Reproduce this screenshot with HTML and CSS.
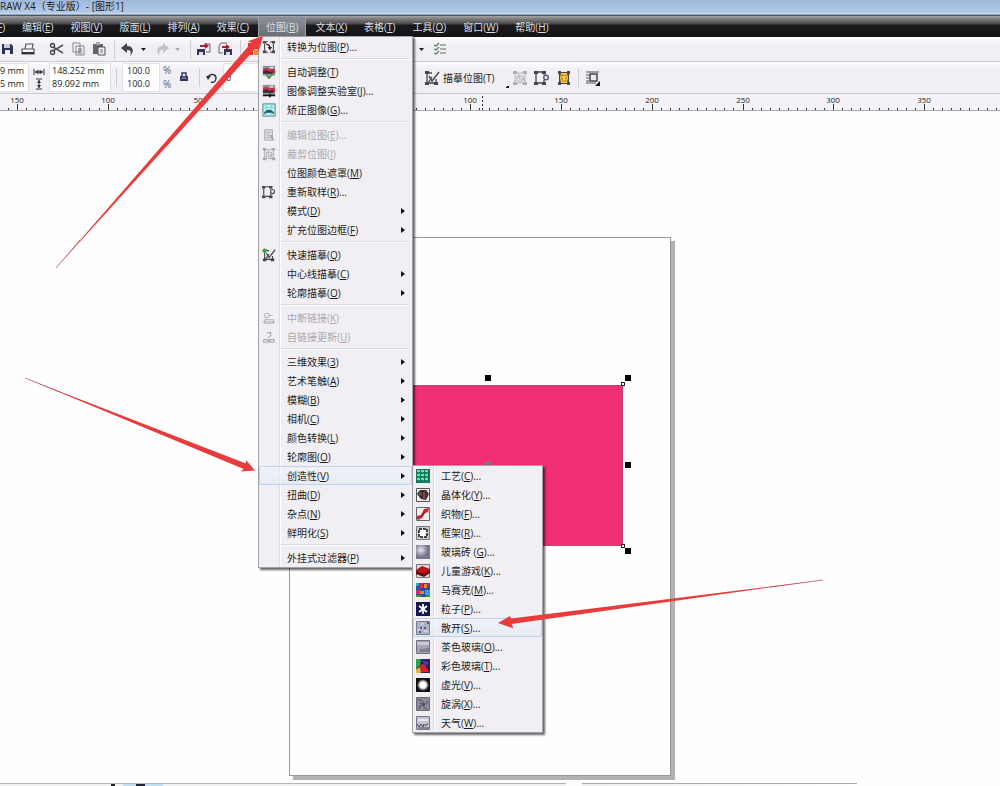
FILE: index.html
```html
<!DOCTYPE html>
<html lang="zh-CN">
<head>
<meta charset="utf-8">
<title>图形1</title>
<link rel="stylesheet" href="styles.css">
</head>
<body>
<svg class="defs" aria-hidden="true">
  <defs>
    <symbol id="frame" viewBox="0 0 16 16"><path d="M3 3H13V13H3Z" fill="none" stroke="currentColor" stroke-width="1"/><path d="M1 1H5V4H1ZM11 1H15V4H11ZM1 12H5V15H1ZM11 12H15V15H11Z" fill="currentColor"/></symbol>
    <symbol id="convert" viewBox="0 0 16 16"><path d="M3 4V12M13 4V12M5 2H7M9 2H11M5 14H7M9 14H11" stroke="#4c4956" stroke-width="1.3" fill="none"/><path d="M1 1H5V4H1ZM11 1H15V4H11ZM1 12H5V15H1ZM11 12H15V15H11Z" fill="#4c4956"/><path d="M5 5C8 5 9 6 9 9" stroke="#222" stroke-width="1.4" fill="none"/><path d="M6.500 8H11.500L9 12Z" fill="#222"/></symbol>
    <symbol id="photo" viewBox="0 0 16 16"><path d="M1 1H15V12H1Z" fill="#8c8fa0"/><path d="M1 5L5 3L8 5L13 4L15 6V9L8 10L1 8Z" fill="#c9283d"/><path d="M1 8L5 6L8 8L13 7V10H1Z" fill="#342b34"/><path d="M9 2H13V4H9Z" fill="#dde3ed"/></symbol>
    <symbol id="crop" viewBox="0 0 16 16"><path d="M3 3H13V13H3ZM5 6H11V11H5ZM7 4V9H13" fill="none" stroke="currentColor"/><path d="M1 1H5V4H1ZM11 1H15V4H11ZM1 12H5V15H1ZM11 12H15V15H11Z" fill="currentColor"/></symbol>
    <symbol id="resample" viewBox="0 0 16 16"><path d="M2 4V12M10 4V5M10 10V13M4 2H8M4 13H8" fill="none" stroke="#474650" stroke-width="1.300"/><path d="M0 1H4V4H0ZM8 1H12V4H8ZM0 12H4V15H0ZM8 12H12V15H8Z" fill="#474650"/><circle cx="12" cy="7.500" r="2.300" fill="#e9e7ef" stroke="#4d4a64" stroke-width="1.300"/></symbol>
    <symbol id="trace" viewBox="0 0 16 16"><path d="M3 4V13H12V9M4 3H8M4 13L8 7" fill="none" stroke="#45434d" stroke-width="1.300"/><path d="M1 1H5V4H1ZM1 12H5V15H1ZM10 12H14V15H10Z" fill="#45434d"/><path d="M5 6L8 11L15 2" fill="none" stroke="#55535d" stroke-width="1.600"/></symbol>
    <symbol id="chain" viewBox="0 0 16 16"><path d="M1 12.500H15M3 10H13V14H3Z" fill="none" stroke="#aaa7ae"/><path d="M3 3H8V7H3ZM8 5H12M5 7V10" fill="none" stroke="#b5b2b9"/></symbol>
    <symbol id="caret" viewBox="0 0 5 3"><path d="M0 0H5L2.500 3Z" fill="currentColor"/></symbol>
    <symbol id="next" viewBox="0 0 4 6"><path d="M0 0L4 3L0 6Z" fill="#111"/></symbol>
  </defs>
</svg>

<header class="title">RAW X4（专业版）- [图形1]</header>

<nav class="menubar">
  <div class="entry"><button>文件(<u>F</u>)</button></div>
  <div class="entry"><button>编辑(<u>E</u>)</button></div>
  <div class="entry"><button>视图(<u>V</u>)</button></div>
  <div class="entry"><button>版面(<u>L</u>)</button></div>
  <div class="entry"><button>排列(<u>A</u>)</button></div>
  <div class="entry"><button>效果(<u>C</u>)</button></div>
  <div class="entry">
    <button class="open">位图(<u>B</u>)</button>
    <div class="menu" role="menu">
      <button class="row" role="menuitem"><svg class="pic"><use href="#convert"/></svg>转换为位图(<u>P</u>)...</button>
      <hr>
      <button class="row" role="menuitem"><svg class="pic" viewBox="0 0 16 16"><use href="#photo" width="16" height="16"/><path d="M5 11L8 15L13 9" fill="none" stroke="#4e8a3c" stroke-width="2"/></svg>自动调整(<u>T</u>)</button>
      <button class="row" role="menuitem"><svg class="pic" viewBox="0 0 16 16"><use href="#photo" width="16" height="16"/><path d="M1 13H15M9 11V15" stroke="#111" stroke-width="2"/></svg>图像调整实验室(<u>J</u>)...</button>
      <button class="row" role="menuitem"><svg class="pic" viewBox="0 0 16 16"><path d="M1 1H15V15H1Z" fill="#b7f0ef" stroke="#53777b"/><path d="M1 5H15M5 1V15M11 1V15" stroke="#6fc4c6" stroke-width=".6"/><path d="M2 13C3 6 13 6 14 13L11 11H5Z" fill="#17606a"/></svg>矫正图像(<u>G</u>)...</button>
      <hr>
      <button class="row" role="menuitem" disabled><svg class="pic" viewBox="0 0 16 16"><path d="M3 2H12V14H3ZM5 5H10M5 8H9M5 11H12" fill="#dddadf" stroke="#aaa7ae"/><path d="M10 8L13 14" stroke="#aaa7ae" stroke-width="2"/></svg>编辑位图(<u>E</u>)...</button>
      <button class="row" role="menuitem" disabled><svg class="pic"><use href="#crop"/></svg>裁剪位图(<u>I</u>)</button>
      <button class="row" role="menuitem"><span class="pic"></span>位图颜色遮罩(<u>M</u>)</button>
      <button class="row" role="menuitem"><svg class="pic"><use href="#resample"/></svg>重新取样(<u>R</u>)...</button>
      <button class="row" role="menuitem"><span class="pic"></span>模式(<u>D</u>)<svg class="next"><use href="#next"/></svg></button>
      <button class="row" role="menuitem"><span class="pic"></span>扩充位图边框(<u>F</u>)<svg class="next"><use href="#next"/></svg></button>
      <hr>
      <button class="row" role="menuitem"><svg class="pic" viewBox="0 0 16 16"><use href="#trace" width="16" height="16"/><circle cx="3" cy="3" r="2.500" fill="#2ca845"/></svg>快速描摹(<u>Q</u>)</button>
      <button class="row" role="menuitem"><span class="pic"></span>中心线描摹(<u>C</u>)<svg class="next"><use href="#next"/></svg></button>
      <button class="row" role="menuitem"><span class="pic"></span>轮廓描摹(<u>O</u>)<svg class="next"><use href="#next"/></svg></button>
      <hr>
      <button class="row" role="menuitem" disabled><svg class="pic"><use href="#chain"/></svg>中断链接(<u>K</u>)</button>
      <button class="row" role="menuitem" disabled><svg class="pic" viewBox="0 0 16 16"><path d="M2 11H7V14H2ZM9 11H14V14H9ZM6 12.500H10M6 3H10V6L7 9" fill="none" stroke="#aaa7ae" stroke-width="1.200"/></svg>自链接更新(<u>U</u>)</button>
      <hr>
      <button class="row" role="menuitem"><span class="pic"></span>三维效果(<u>3</u>)<svg class="next"><use href="#next"/></svg></button>
      <button class="row" role="menuitem"><span class="pic"></span>艺术笔触(<u>A</u>)<svg class="next"><use href="#next"/></svg></button>
      <button class="row" role="menuitem"><span class="pic"></span>模糊(<u>B</u>)<svg class="next"><use href="#next"/></svg></button>
      <button class="row" role="menuitem"><span class="pic"></span>相机(<u>C</u>)<svg class="next"><use href="#next"/></svg></button>
      <button class="row" role="menuitem"><span class="pic"></span>颜色转换(<u>L</u>)<svg class="next"><use href="#next"/></svg></button>
      <button class="row" role="menuitem"><span class="pic"></span>轮廓图(<u>O</u>)<svg class="next"><use href="#next"/></svg></button>
      <div class="holder">
        <button class="row lit" role="menuitem"><span class="pic"></span>创造性(<u>V</u>)<svg class="next"><use href="#next"/></svg></button>
        <div class="menu sub" role="menu">
          <button class="row" role="menuitem"><svg class="pic" viewBox="0 0 14 14"><path d="M0 0H14V14H0Z" fill="#13745a"/><path d="M1 2H13M1 6H13M1 10H13" stroke="#65e0a9" stroke-width="2" stroke-dasharray="3 1"/><path d="M2 4H13M2 8H13M2 12H13" stroke="#2ba878" stroke-dasharray="2 2"/></svg>工艺(<u>C</u>)...</button>
          <button class="row" role="menuitem"><svg class="pic" viewBox="0 0 14 14"><path d="M.5 .5H13.500V13.500H.5Z" fill="#eee" stroke="#555"/><path d="M1 6L4 2L10 2L13 6L10 12L5 11Z" fill="#37243e"/><path d="M2 6L5 3L6 8Z" fill="#53722e"/><path d="M7 4L9 3L9 11L7 12Z" fill="#9a4b20"/><path d="M10 4L12 6L10 10Z" fill="#4a3288"/></svg>晶体化(<u>Y</u>)...</button>
          <button class="row" role="menuitem"><svg class="pic" viewBox="0 0 14 14"><path d="M.5 .5H13.500V13.500H.5Z" fill="#eee" stroke="#666"/><path d="M1 12L1 9L5 8L8 2L13 1L12 5L9 6L6 11L2 13Z" fill="#cf2430"/><path d="M5 10L9 5" stroke="#6f1921"/></svg>织物(<u>F</u>)...</button>
          <button class="row" role="menuitem"><svg class="pic" viewBox="0 0 14 14"><path d="M.5 .5H13.500V13.500H.5Z" fill="#ccc" stroke="#777"/><path d="M3 3H11V11H3Z" fill="#fff" stroke="#111" stroke-width="1.500" stroke-dasharray="3 1"/></svg>框架(<u>R</u>)...</button>
          <button class="row" role="menuitem"><svg class="pic" viewBox="0 0 14 14"><defs><radialGradient id="glass" cx=".35" cy=".35"><stop stop-color="#e8e8f2"/><stop offset="1" stop-color="#77758f"/></radialGradient></defs><path d="M0 0H14V14H0Z" fill="url(#glass)"/></svg>玻璃砖 (<u>G</u>)...</button>
          <button class="row" role="menuitem"><svg class="pic" viewBox="0 0 14 14"><path d="M.5 .5H13.500V13.500H.5Z" fill="#ddd" stroke="#777"/><path d="M0 6L6 2L14 5V8L8 12L0 9Z" fill="#c0121d"/><path d="M0 7L8 10L14 6V9L8 13L0 10Z" fill="#5b0d14"/></svg>儿童游戏(<u>K</u>)...</button>
          <button class="row" role="menuitem"><svg class="pic" viewBox="0 0 14 14"><path d="M0 0H14V14H0Z" fill="#274fa0"/><path d="M0 0H3V3H0ZM9 7H14V12H9Z" fill="#30a9c7"/><path d="M4 0H7V5H4ZM0 7H4V11H0Z" fill="#cf2f52"/><path d="M8 1H11V5H8ZM4 8H8V11H4Z" fill="#e18631"/><path d="M11 0H14V4H11ZM1 4H4V7H1Z" fill="#6c3b9f"/><path d="M0 12H5V14H0ZM10 12H14V14H10Z" fill="#3a963e"/></svg>马赛克(<u>M</u>)...</button>
          <button class="row" role="menuitem"><svg class="pic" viewBox="0 0 14 14"><path d="M0 0H14V14H0Z" fill="#141653"/><path d="M7 2V12M3 4L11 10M11 4L3 10" stroke="#fff" stroke-width="1.800"/></svg>粒子(<u>P</u>)...</button>
          <button class="row lit" role="menuitem"><svg class="pic" viewBox="0 0 14 14"><path d="M.5 .5H13.500V13.500H.5Z" fill="#aeb2c9" stroke="#777b91"/><path d="M4 7H6M8 7H10M11 2H13M3 11H5" stroke="#383c55" stroke-width="1.500"/><path d="M1 9H4M8 10H12M5 3H8" stroke="#e5e8f4"/></svg>散开(<u>S</u>)...</button>
          <button class="row" role="menuitem"><svg class="pic" viewBox="0 0 14 14"><path d="M.5 .5H13.500V13.500H.5Z" fill="#a7a5b4" stroke="#716f80"/><path d="M1 2H13V5H1Z" fill="#cbc9d5"/><path d="M4 9H8L10 8H13V12H3Z" fill="#817e90"/></svg>茶色玻璃(<u>O</u>)...</button>
          <button class="row" role="menuitem"><svg class="pic" viewBox="0 0 14 14"><path d="M0 0H14V14H0Z" fill="#391d58"/><path d="M0 0H5L4 7L0 9Z" fill="#25a84b"/><path d="M6 1L13 4L9 7Z" fill="#2449bc"/><path d="M4 6L8 5L13 13H5Z" fill="#df202c"/><path d="M0 10L4 8L5 14H0Z" fill="#e3b728"/></svg>彩色玻璃(<u>T</u>)...</button>
          <button class="row" role="menuitem"><svg class="pic" viewBox="0 0 14 14"><defs><radialGradient id="glow"><stop offset=".5" stop-color="#fff"/><stop offset="1" stop-color="#111"/></radialGradient></defs><path d="M0 0H14V14H0Z" fill="#111"/><circle cx="7" cy="7" r="6" fill="url(#glow)"/></svg>虚光(<u>V</u>)...</button>
          <button class="row" role="menuitem"><svg class="pic" viewBox="0 0 14 14"><path d="M.5 .5H13.500V13.500H.5Z" fill="#8b8b9d" stroke="#68687a"/><path d="M2 3C6 2 8 5 7 8M12 4C10 8 7 8 4 6M3 12C3 9 6 7 9 8M11 12C8 12 7 9 8 6" fill="none" stroke="#46465f"/></svg>旋涡(<u>X</u>)...</button>
          <button class="row" role="menuitem"><svg class="pic" viewBox="0 0 14 14"><path d="M.5 .5H13.500V13.500H.5Z" fill="#c4c4d5" stroke="#77778a"/><path d="M1 8L3 11L5 8L7 11L8 8L10 10L12 7M2 12H13" fill="none" stroke="#45455b"/><path d="M2 4H12" stroke="#e8e8f3" stroke-width="2"/></svg>天气(<u>W</u>)...</button>
        </div>
      </div>
      <button class="row" role="menuitem"><span class="pic"></span>扭曲(<u>D</u>)<svg class="next"><use href="#next"/></svg></button>
      <button class="row" role="menuitem"><span class="pic"></span>杂点(<u>N</u>)<svg class="next"><use href="#next"/></svg></button>
      <button class="row" role="menuitem"><span class="pic"></span>鲜明化(<u>S</u>)<svg class="next"><use href="#next"/></svg></button>
      <hr>
      <button class="row" role="menuitem"><span class="pic"></span>外挂式过滤器(<u>P</u>)<svg class="next"><use href="#next"/></svg></button>
    </div>
  </div>
  <div class="entry"><button>文本(<u>X</u>)</button></div>
  <div class="entry"><button>表格(<u>T</u>)</button></div>
  <div class="entry"><button>工具(<u>O</u>)</button></div>
  <div class="entry"><button>窗口(<u>W</u>)</button></div>
  <div class="entry"><button>帮助(<u>H</u>)</button></div>
</nav>

<div class="bar tools">
  <button class="tool" aria-label="保存"><svg viewBox="0 0 16 16"><path d="M3 3H12L14 5V13H3Z" fill="#2e3157"/><path d="M5 3H11V7H5Z" fill="#c8cbe0"/><path d="M6 9H11V13H6Z" fill="#eee"/></svg></button>
  <button class="tool" aria-label="打印"><svg viewBox="0 0 16 16"><path d="M5 8L6 3H13L12 8M2 8H14V13H2Z" fill="#f6f5f8" stroke="#55535d" stroke-width="1.200"/><path d="M2 12H14" stroke="#333" stroke-width="2"/></svg></button>
  <span class="space"></span>
  <button class="tool" aria-label="剪切"><svg viewBox="0 0 16 16"><path d="M4 6L14 12M4 10L14 4" stroke="#55535d" stroke-width="1.500"/><circle cx="3.500" cy="4.500" r="2" fill="none" stroke="#45434d" stroke-width="1.400"/><circle cx="3.500" cy="11.500" r="2" fill="none" stroke="#45434d" stroke-width="1.400"/></svg></button>
  <button class="tool" aria-label="复制"><svg viewBox="0 0 16 16"><path d="M3 2H10V11H3ZM6 5H14V14H6Z" fill="#f3f2f5" stroke="#85838c"/><path d="M8 8H12M8 10H12M8 12H12" stroke="#777"/></svg></button>
  <button class="tool" aria-label="粘贴"><svg viewBox="0 0 16 16"><path d="M2 3H12V13H2Z" fill="#66646e"/><path d="M5 1H9V4H5Z" fill="#aaa"/><path d="M7 6H14V14H7Z" fill="#eee" stroke="#514f59"/><path d="M9 9H12M9 11H12" stroke="#777"/></svg></button>
  <span class="rule"></span>
  <button class="tool" aria-label="撤销"><svg viewBox="0 0 16 16"><path d="M1 7L7 2V5C13 5 15 10 10 15C12 10 10 9 7 9V12Z" fill="#46444f"/></svg></button>
  <svg class="caret"><use href="#caret"/></svg>
  <button class="tool" aria-label="重做"><svg viewBox="0 0 16 16"><path d="M15 7L9 2V5C3 5 1 10 6 15C4 10 6 9 9 9V12Z" fill="#c5c2ca"/></svg></button>
  <svg class="caret dim"><use href="#caret"/></svg>
  <span class="rule"></span>
  <button class="tool" aria-label="导入"><svg viewBox="0 0 16 16"><path d="M1 8H9V14H1Z" fill="#33355b"/><path d="M3 11H7V14H3Z" fill="#ddd"/><path d="M8 3H14V11H10" fill="none" stroke="#66646e"/><path d="M4 4H9V2L13 5L9 8V6H4Z" fill="#a51f32"/></svg></button>
  <button class="tool" aria-label="导出"><svg viewBox="0 0 16 16"><path d="M7 8H15V14H7Z" fill="#33355b"/><path d="M9 11H13V14H9Z" fill="#ddd"/><path d="M6 12H2V5L4 2H10" fill="none" stroke="#66646e"/><path d="M5 5H9V3L13 6L9 9V7H5Z" fill="#a51f32"/></svg></button>
  <span class="rule"></span>
  <button class="tool" aria-label="启动器"><svg viewBox="0 0 16 16"><path d="M2 2H7V7H2ZM8 3H14V8H8ZM2 9H7V14H2Z" fill="#d83325"/><path d="M8 9H14V14H8Z" fill="#e88a28"/></svg></button>
  <span class="under"></span>
  <svg class="caret"><use href="#caret"/></svg>
  <button class="tool" aria-label="选项"><svg viewBox="0 0 16 16"><path d="M8 4H14M8 8H14M8 12H14" stroke="#66706b"/><path d="M2 4L4 5L7 2M2 8L4 9L7 6M2 12L4 13L7 10" fill="none" stroke="#528064" stroke-width="1.300"/></svg></button>
</div>

<div class="bar props">
  <div class="stack pos"><input aria-label="X" value="9 mm"><input aria-label="Y" value="5 mm"></div>
  <svg class="dims" viewBox="0 0 12 26"><path d="M1 4V10M11 4V10M2 7H10M6 5V9M3 14H9M3 24H9M6 15V23" stroke="#333" fill="none"/><path d="M2 7L5 5V9ZM10 7L7 5V9ZM6 15L4 18H8ZM6 23L4 20H8Z" fill="#333"/></svg>
  <div class="stack size"><input aria-label="宽度" value="148.252 mm"><input aria-label="高度" value="89.092 mm"></div>
  <span class="rule"></span>
  <div class="stack scale"><input aria-label="水平比例" value="100.0"><input aria-label="垂直比例" value="100.0"></div>
  <div class="units"><span>%</span><span>%</span></div>
  <button class="tool lock" aria-label="锁定比例"><svg viewBox="0 0 16 16"><path d="M5 6V3H9V6" fill="none" stroke="#393a60" stroke-width="1.500"/><path d="M3 6H11V11H3Z" fill="#393a60"/><path d="M5 8H9" stroke="#b6b7cc"/></svg></button>
  <span class="rule"></span>
  <svg class="turn" viewBox="0 0 12 12"><path d="M2 5C4 1 10 2 10 6C10 9 8 11 5 10" fill="none" stroke="#333" stroke-width="1.400"/><path d="M0 4H5L2 8Z" fill="#333"/></svg>
  <div class="stack angle"><input aria-label="旋转角度" value="0"></div>
  <button class="label"><svg viewBox="0 0 16 16"><use href="#trace"/></svg>描摹位图(T)<i></i></button>
  <button class="tool" aria-label="裁剪位图" disabled><svg><use href="#crop"/></svg></button>
  <button class="tool" aria-label="重新取样"><svg><use href="#resample"/></svg></button>
  <button class="tool" aria-label="位图颜色遮罩"><svg viewBox="0 0 16 16"><path d="M3 2H13V14H3Z" fill="#494650"/><path d="M5 3H11L12 8L11 13H5L4 8Z" fill="#f6cb3d"/><path d="M6 5H10V11H6Z" fill="none" stroke="#9b6b18" stroke-dasharray="2 1"/><path d="M2 1H5V4H2ZM11 1H14V4H11ZM2 12H5V15H2ZM11 12H14V15H11Z" fill="#494650"/></svg></button>
  <span class="rule"></span>
  <button class="tool" aria-label="文本换行"><svg viewBox="0 0 16 16"><path d="M1 2H14M1 5H4M1 8H4M1 11H4M1 13H11" stroke="#55535d"/><path d="M5 4H12V11H5Z" fill="#eceaf0" stroke="#474552" stroke-width="1.500"/><path d="M15 11V16H10Z" fill="#111"/></svg></button>
</div>

<svg class="ruler" id="ruler" aria-hidden="true"></svg>

<main class="canvas">
  <div class="page"></div>
  <div class="shape"></div>
  <i class="grip g1"></i><i class="grip g2"></i><i class="grip g3"></i><i class="grip g4"></i>
  <i class="node n1"></i><i class="node n2"></i>
  <svg class="middle" viewBox="0 0 8 8"><path d="M1 1L7 7M7 1L1 7" stroke="#4f8f87" stroke-width="2"/></svg>
</main>

<footer class="tabs"><span class="strip"><i class="mark"></i><i class="tab"></i></span><span class="scroll"></span></footer>

<svg class="arrows" viewBox="0 0 1000 786" aria-hidden="true">
  <g fill="#ea3b3c">
    <path d="M56 268L251.400 42.700L247.700 41.200L263 36L258.700 51.800L256.600 47.300Z"/>
    <path d="M25 378L245.900 463.600L246 460L255 470.500L240.700 471.500L243.700 469Z"/>
    <path d="M823 580L511 618.500L510 616L498 623L513.500 628.500L511.600 624Z"/>
  </g>
  <path d="M25 378L60 392M56 268L80 240M823 580L770 587" stroke="#a45566" stroke-width=".7"/>
</svg>
<script src="ruler.js"></script>
</body>
</html>
```

FILE: styles.css
```css
* { box-sizing: border-box; }

body {
  margin: 0;
  min-height: 100vh;
  display: flex;
  flex-direction: column;
  position: relative;
  overflow: hidden;
  background: #fefefe;
  color: #1c1c20;
  font: 10px/12px "Open Sans", "Noto Sans CJK SC", sans-serif;
}

button, input { font: inherit; color: inherit; border: 0; padding: 0; background: none; }
button { white-space: nowrap; }
u { text-underline-offset: 1px; }
.defs { position: absolute; width: 0; height: 0; }

.title {
  height: 16px;
  line-height: 13px;
  white-space: nowrap;
  background: linear-gradient(#9fb9db, #b3cae8 13px, #dfeaf6 14px, #47586b 15px);
}

.menubar {
  display: flex;
  gap: 1px;
  height: 21px;
  margin-left: -34px;
  background: linear-gradient(#a5a5a7, #7c7c7f 3px, #47474a 8px, #1a1a1d 9px, #141417);
  color: #dedee0;
}
.entry { position: relative; display: flex; }
.entry > button { padding: 0 8px; }
.entry > .open { background: linear-gradient(#8e9298, #686d75); box-shadow: inset 0 0 0 1px #9aa2ab; }

.menu {
  position: absolute;
  z-index: 5;
  top: calc(100% - 1px);
  left: 0;
  width: 155px;
  border: 1px solid #a3a1a6;
  background: linear-gradient(90deg, transparent 20px, #dedbe1 20px, #dedbe1 21px, #fff 21px, #fff 22px, transparent 22px), #f2eff4;
  box-shadow: 2px 2px 2px #0009;
  color: #1c1c20;
}
.menu hr { height: 2px; margin: 2px 2px 2px 22px; border: 0; border-top: 1px solid #dedbe1; background: #fff; }
.row {
  display: flex;
  align-items: center;
  width: 100%;
  height: 19px;
  padding: 0 6px 0 2px;
  border: 1px solid transparent;
  text-align: left;
}
.row:disabled { color: #aaa7ae; }
.row .pic { width: 14px; height: 14px; margin-right: 11px; flex: none; }
.row .next { width: 4px; height: 6px; margin-left: auto; }
.row.lit { border-color: #b9d4eb; border-radius: 2px; background: linear-gradient(#f0f3f9aa, #e0eaf5aa); }
.holder { position: relative; }
.sub { top: -1px; left: 153px; width: 131px; }

.bar { display: flex; align-items: center; border-bottom: 1px solid #cbc8ce; background: linear-gradient(#fdfcfe, #f2eff4 8px); }
.bar .rule { width: 1px; height: 19px; background: #cfccd3; flex: none; }
.tool { width: 16px; height: 16px; flex: none; }
.tool svg { display: block; width: 16px; height: 16px; }
.tool:disabled { color: #b2afb6; }

.tools { height: 25px; gap: 5px; margin-left: -1px; }
.tools .rule { margin-left: 2px; }
.space { width: 3px; }
.caret { width: 5px; height: 3px; margin-right: 3px; flex: none; }
.dim { color: #aaa; }
.under { width: 147px; }

.props { height: 32px; gap: 6px; }
.stack, .units { display: flex; flex-direction: column; height: 27px; font-size: 9px; }
.stack { background: #fff; box-shadow: 0 0 0 1px #e3e1e6; }
.stack input { width: 100%; flex: 1; min-height: 0; }
.pos { width: 28px; }
.size { width: 60px; padding-left: 2px; }
.scale { width: 36px; padding-left: 4px; }
.angle { width: 180px; padding-left: 2px; }
.dims { width: 12px; height: 26px; margin-left: -1px; margin-right: -1px; }
.units { width: 8px; margin-left: -2px; }
.units span { flex: 1; font-size: 10px; color: #66646c; }
.turn { width: 12px; height: 12px; }
.label { display: flex; align-items: center; gap: 3px; margin-left: 14px; margin-right: -3px; }
.label svg { width: 16px; height: 16px; }
.label i { align-self: end; width: 3px; height: 3px; margin: 0 0 -2px 9px; background: linear-gradient(135deg, transparent 50%, #111 50%); }

.ruler { display: block; width: 100%; height: 17px; border-bottom: 1px solid #aaa8ad; background: #f4f2f6; }
.ruler text { font-size: 8px; text-anchor: middle; fill: #222; }
.ruler path { stroke: #333; }

.canvas { position: relative; flex: 1; }
.page { position: absolute; left: 289px; top: 126px; width: 382px; height: 539px; border: 1px solid #99979b; background: #fefefe; box-shadow: 4px 4px #b2b2b2; }
.shape { position: absolute; left: 354px; top: 274px; width: 269px; height: 161px; background: #f12f74; border: 1px solid #b84972; }
.grip { position: absolute; width: 6px; height: 6px; background: #050505; }
.g1 { left: 485px; top: 264px; }
.g2 { left: 625px; top: 264px; }
.g3 { left: 625px; top: 351px; }
.g4 { left: 625px; top: 437px; }
.node { position: absolute; left: 621px; width: 4px; height: 4px; border: 1px solid #222; background: #fff; }
.n1 { top: 271px; }
.n2 { top: 433px; }
.middle { position: absolute; left: 484px; top: 350px; width: 8px; height: 8px; }

.tabs { display: flex; gap: 16px; height: 3px; }
.strip { display: flex; gap: 8px; width: 566px; padding-left: 111px; border-top: 1px solid #b5b3b7; background: #f1f1f3; }
.mark { width: 4px; background: #222; }
.tab { width: 40px; background: linear-gradient(90deg, #bfe0ee 13px, #223 13px, #223 22px, #bfe0ee 22px); }
.scroll { width: 275px; border-top: 1px solid #aaa8ad; background: linear-gradient(90deg, #eee, #fff); }

.arrows { position: absolute; z-index: 9; left: 0; top: 0; width: 1000px; height: 786px; pointer-events: none; }
```

FILE: ruler.js
```js
const ruler = document.getElementById('ruler');
const ns = 'http://www.w3.org/2000/svg';
const origin = 289;
const step = 9.07;
let ticks = '';

for (let i = -31; i * step + origin < window.innerWidth; i++) {
  const x = Math.round(origin + i * step) + 0.5;
  const major = i % 10 === 0;
  ticks += `M${x} ${major ? 10 : 14}V16`;
}
for (let i = -3; i * 10 * step + origin < window.innerWidth; i++) {
  // The open menu covers the origin and the first mark after it
  if (i === 0 || i === 1) continue;
  const label = document.createElementNS(ns, 'text');
  label.setAttribute('x', Math.round(origin + i * 10 * step));
  label.setAttribute('y', 9);
  label.textContent = Math.abs(i * 50);
  ruler.append(label);
}
const path = document.createElementNS(ns, 'path');
path.setAttribute('d', ticks);
ruler.append(path);

const marker = document.createElementNS(ns, 'path');
marker.setAttribute('d', 'M482.5 2V16');
marker.setAttribute('stroke-dasharray', '2 2');
ruler.append(marker);
```
